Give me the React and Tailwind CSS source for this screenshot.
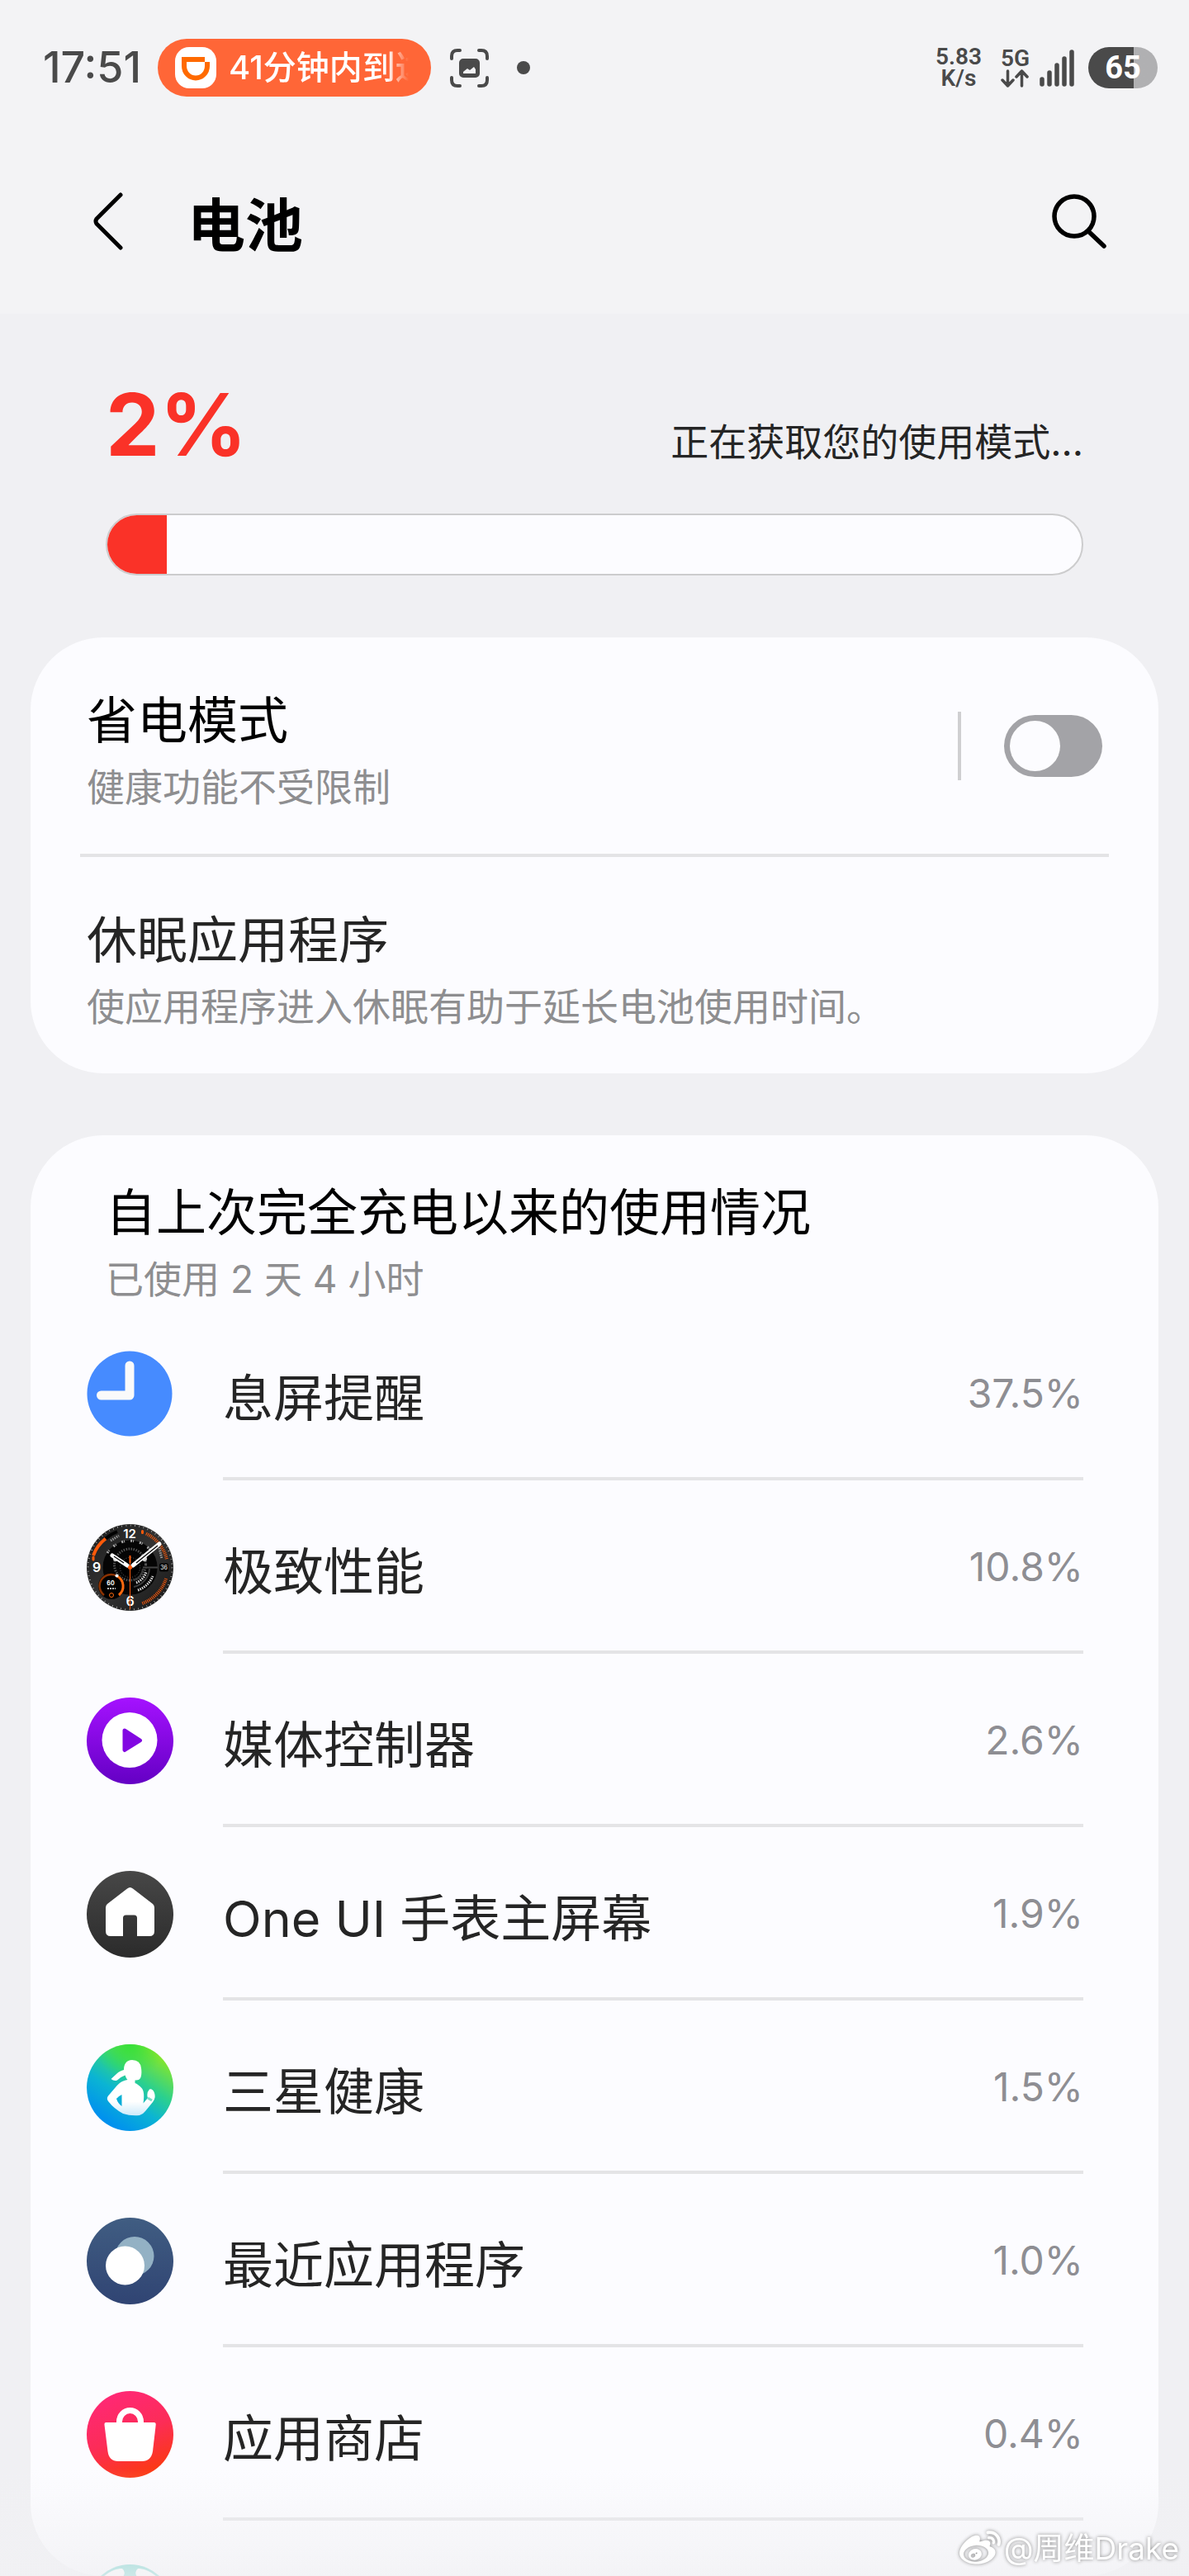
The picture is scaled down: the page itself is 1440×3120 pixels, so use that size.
import React, { useState } from 'react';
import { FaWeibo } from 'react-icons/fa';

function ClockIcon() {
  return (
    <svg viewBox="0 0 105 105" className="h-[105px] w-[105px]" aria-hidden="true">
      <circle cx="52" cy="52" r="51.5" fill="#468bff" />
      <path d="M52 18V54H17.5" fill="none" stroke="#fafafa" strokeWidth="11" strokeLinecap="round" strokeLinejoin="round" />
    </svg>
  );
}

function WatchFaceIcon() {
  return (
    <svg viewBox="0 0 105 105" className="h-[105px] w-[105px]" aria-hidden="true" fontFamily="Inter, sans-serif">
      <defs>
        <linearGradient id="watchBg" x1="0" y1="0" x2="1" y2="1">
          <stop offset="0" stopColor="#1c1c1c" />
          <stop offset="0.5" stopColor="#333" />
          <stop offset="1" stopColor="#161616" />
        </linearGradient>
      </defs>
      <circle cx="52.5" cy="52.5" r="52.5" fill="url(#watchBg)" />
      <circle cx="52.5" cy="52.5" r="51" fill="none" stroke="#c9c9c9" strokeWidth="2" strokeDasharray="0.7 4.64" />
      <circle cx="52.5" cy="52.5" r="33" fill="#050505" />
      <circle cx="52.5" cy="49" r="19" fill="none" stroke="#555" strokeWidth="3" strokeDasharray="1.5 1.5" />
      <circle cx="52.5" cy="52.5" r="12" fill="#000" stroke="#666" strokeDasharray="1 2" />
      <circle cx="35" cy="42" r="3" fill="#d5d5d5" />
      <circle cx="70" cy="42" r="3" fill="#d5d5d5" />
      <path d="M68 52.5H86" stroke="#444" strokeWidth="2" />
      <path d="M76 54A24 24 0 0 1 57 76M68 54A16 16 0 0 1 57 68" fill="none" stroke="#3c3c3c" strokeWidth="2" />
      <path d="M25 35A33 33 0 0 1 80 35" fill="none" stroke="#aaa" strokeWidth="3" strokeDasharray="2 1 1 7" />
      <path d="M60 71A20 20 0 0 0 72 58M62 80A30 30 0 0 0 80 63" fill="none" stroke="#ddd" strokeWidth="3" strokeDasharray="1.5 1.2" />
      {/* outer gauges */}
      <path d="M23 17.5A46 46 0 0 0 8 38" fill="none" stroke="#ff5a0a" strokeWidth="4" />
      <path d="M23 17.5A46 46 0 0 1 37 9" fill="none" stroke="#000" strokeWidth="4" />
      <path d="M8 40V43M67.5 8.5V10.5" stroke="#ff5a0a" strokeWidth="3" strokeLinecap="round" />
      <path d="M72 11.5A46 46 0 0 1 97 43M96 66A46 46 0 0 1 67 96" fill="none" stroke="#ff5a0a" strokeWidth="4" strokeDasharray="1 1.2" />
      <path d="M29 20L39 14M88 29L91 42" stroke="#999" strokeWidth="3" strokeDasharray="1.5 1.2" />
      {/* battery dial */}
      <circle cx="30" cy="75" r="16" fill="#000" />
      <path d="M21 86A14 14 0 0 1 36 62.5" fill="none" stroke="#8a3203" strokeWidth="2.5" />
      <path d="M37 63A14 14 0 0 1 39 86" fill="none" stroke="#ff6a10" strokeWidth="3" />
      <circle cx="36.5" cy="62.5" r="2" fill="#fff" />
      <circle cx="30" cy="86" r="2.5" fill="none" stroke="#ff6a10" />
      <text x="29" y="74" fontSize="7" fontWeight="700" fill="#fff" textAnchor="middle">60</text>
      <path d="M25 78H35" stroke="#bbb" strokeWidth="2" strokeDasharray="2 1" />
      <text x="52" y="17" fontSize="15" fontWeight="600" fill="#fff" textAnchor="middle">12</text>
      <text x="12" y="58" fontSize="16" fontWeight="600" fill="#fff" textAnchor="middle">9</text>
      <text x="52.5" y="99" fontSize="16" fontWeight="600" fill="#fff" textAnchor="middle">6</text>
      <rect x="88" y="47.5" width="11" height="10" rx="2" fill="#000" />
      <text x="93.5" y="55" fontSize="7" fill="#fff" textAnchor="middle">36</text>
      {/* hands */}
      <path d="M49 50L31 38M56 50L88 24" stroke="#fff" strokeWidth="5" strokeLinecap="round" />
      <path d="M45 47L33 39M60 47L86 26" stroke="#111" strokeWidth="1.5" />
      <path d="M52.5 38V103" stroke="#ff5a0a" strokeWidth="1" />
      <path d="M52.5 38V47" stroke="#ff5a0a" strokeWidth="2" />
      <circle cx="52.5" cy="52.5" r="2.5" fill="#ff5a0a" />
    </svg>
  );
}

function MediaIcon() {
  return (
    <svg viewBox="0 0 105 105" className="h-[105px] w-[105px]" aria-hidden="true">
      <defs>
        <linearGradient id="mediaBg" x1="0" y1="0" x2="0" y2="1">
          <stop offset="0" stopColor="#a512ff" />
          <stop offset="1" stopColor="#6400c4" />
        </linearGradient>
      </defs>
      <circle cx="52.5" cy="52.5" r="52.5" fill="url(#mediaBg)" />
      <circle cx="52" cy="51.5" r="33.5" fill="#fff" />
      <path d="M46 40L64.5 52L46 63.5Z" fill="#8207e2" stroke="#8207e2" strokeWidth="5" strokeLinejoin="round" />
    </svg>
  );
}

function HomeIcon() {
  return (
    <svg viewBox="0 0 105 105" className="h-[105px] w-[105px]" aria-hidden="true">
      <defs>
        <linearGradient id="homeBg" x1="0" y1="0" x2="0" y2="1">
          <stop offset="0" stopColor="#474747" />
          <stop offset="1" stopColor="#2b2b2b" />
        </linearGradient>
      </defs>
      <circle cx="52.5" cy="52.5" r="52.5" fill="url(#homeBg)" />
      <path
        d="M49 21.5Q52.5 18.5 56 21.5L80 40Q82 41.5 82 44.5V73Q82 79 76 79H61V57Q61 53.5 57.5 53.5H47.5Q44 53.5 44 57V79H29Q23 79 23 73V44.5Q23 41.5 25 40Z"
        fill="#fff"
      />
    </svg>
  );
}

function HealthIcon() {
  return (
    <svg viewBox="0 0 105 105" className="h-[105px] w-[105px]" aria-hidden="true">
      <defs>
        <linearGradient id="healthBg" x1="0.25" y1="0.9" x2="0.8" y2="0.1">
          <stop offset="0" stopColor="#0091ee" />
          <stop offset="0.35" stopColor="#0bb4d3" />
          <stop offset="0.62" stopColor="#2bd08e" />
          <stop offset="1" stopColor="#86e62a" />
        </linearGradient>
        <radialGradient id="healthGreen" cx="0.5" cy="0" r="0.4">
          <stop offset="0" stopColor="#35e03a" />
          <stop offset="1" stopColor="#35e03a" stopOpacity="0" />
        </radialGradient>
        <linearGradient id="healthBody" x1="0" y1="0" x2="0" y2="1">
          <stop offset="0.75" stopColor="#fff" />
          <stop offset="1" stopColor="#cdeafa" />
        </linearGradient>
      </defs>
      <circle cx="52.5" cy="52.5" r="52.5" fill="url(#healthBg)" />
      <circle cx="52.5" cy="52.5" r="52.5" fill="url(#healthGreen)" />
      <path
        fillRule="evenodd"
        d="M55 19C48 19 45 24 45 31C42 32 39 33 36 36L29.5 42Q33 45 37 43.5Q42 39 46.5 37.5Q47.5 41 49.5 43C43 44 39 47 35 52L26 62.5Q23.5 66 26.5 69.5Q33 78 44 84Q53 87 64 86Q68 85 71 81L80 70Q84 65 82 59Q80 53.5 76 54.5Q72 59 74 65L68.5 71.5Q70.5 58 67 53.5Q62 48 58.5 47V43.5Q64 44 65.5 40Q67 35 66 29Q65 19 55 19ZM36 66Q38 63 42.5 61V75Q38 72 36 66Z"
        fill="url(#healthBody)"
      />
      <path d="M74 65L79 68" stroke="#7fdcc8" strokeWidth="3" />
    </svg>
  );
}

function RecentsIcon() {
  return (
    <svg viewBox="0 0 105 105" className="h-[105px] w-[105px]" aria-hidden="true">
      <defs>
        <linearGradient id="recentsBg" x1="0" y1="0" x2="0" y2="1">
          <stop offset="0" stopColor="#405d82" />
          <stop offset="1" stopColor="#304473" />
        </linearGradient>
      </defs>
      <circle cx="52.5" cy="52.5" r="52.5" fill="url(#recentsBg)" />
      <circle cx="58" cy="46.5" r="23.5" fill="#93b1c4" />
      <circle cx="46.5" cy="58" r="23.5" fill="#fff" />
    </svg>
  );
}

function StoreIcon() {
  return (
    <svg viewBox="0 0 105 105" className="h-[105px] w-[105px]" aria-hidden="true">
      <defs>
        <linearGradient id="storeBg" x1="0.3" y1="0" x2="0.7" y2="1">
          <stop offset="0" stopColor="#ff2876" />
          <stop offset="0.5" stopColor="#fc2c58" />
          <stop offset="1" stopColor="#fb3a0c" />
        </linearGradient>
      </defs>
      <circle cx="52.5" cy="52.5" r="52.5" fill="url(#storeBg)" />
      <path d="M39.5 40V37A13 13.5 0 0 1 65.5 37V40" fill="none" stroke="#fff" strokeWidth="7" />
      <path d="M23.5 38H81.5Q84 38 83.7 41L80 73Q78 85 67 85H38Q27 85 25.5 73L21.5 41Q21.2 38 23.5 38Z" fill="#fff" />
    </svg>
  );
}

function BallIcon() {
  return (
    <svg viewBox="0 0 105 105" className="h-[105px] w-[105px]" aria-hidden="true">
      <circle cx="52.5" cy="52.5" r="52.5" fill="#3cc4b8" />
      <path d="M18 17C27 8 36 5 43 5Q48 9 44 15Q34 24 16 28ZM87 17C78 8 69 5 62 5Q57 9 61 15Q71 24 89 28Z" fill="#fff" />
    </svg>
  );
}

const apps = [
  { name: '息屏提醒', usage: '37.5%', Icon: ClockIcon },
  { name: '极致性能', usage: '10.8%', Icon: WatchFaceIcon },
  { name: '媒体控制器', usage: '2.6%', Icon: MediaIcon },
  { name: 'One UI 手表主屏幕', usage: '1.9%', Icon: HomeIcon },
  { name: '三星健康', usage: '1.5%', Icon: HealthIcon },
  { name: '最近应用程序', usage: '1.0%', Icon: RecentsIcon },
  { name: '应用商店', usage: '0.4%', Icon: StoreIcon },
  { name: '', usage: '', Icon: BallIcon },
];

function StatusBar() {
  return (
    <div className="flex h-[164px] shrink-0 items-center bg-[#f3f3f5] pr-[38px] pl-[52px] text-[#4a4a4a]">
      <span className="w-[139px] text-[52px] leading-[70px] font-medium whitespace-nowrap">17:51</span>

      {/* Live trip capsule */}
      <div className="flex h-[70px] w-[331px] items-center gap-[15px] rounded-full bg-[#ff6637] pl-[21px]">
        <svg viewBox="0 0 50 50" className="h-[50px] w-[50px] shrink-0" aria-hidden="true">
          <rect width="50" height="50" rx="17" fill="#fff" />
          <path d="M8 15H36M11 15V23A14 14.5 0 0 0 39 23V18" fill="none" stroke="#ff6a00" strokeWidth="6" />
        </svg>
        <span className="w-[218px] overflow-hidden [mask-image:linear-gradient(to_right,black_88%,transparent)] text-[40px] leading-[60px] font-medium whitespace-nowrap text-white">
          41分钟内到达
        </span>
      </div>

      <svg viewBox="0 0 47 47" className="ml-[23px] h-[47px] w-[47px]" fill="none" stroke="#4a4a4a" strokeWidth="4" strokeLinecap="round" aria-hidden="true">
        <path d="M2 12V9Q2 2 9 2H12M35 2H38Q45 2 45 9V12M45 35V38Q45 45 38 45H35M12 45H9Q2 45 2 38V35" />
        <rect x="13" y="14" width="21" height="19" rx="3" fill="#4a4a4a" />
        <path d="M16 28L21 24L24 26L29 22L31 25V30H16Z" fill="#f3f3f5" stroke="none" />
      </svg>
      <span className="ml-[34px] h-4 w-4 rounded-full bg-[#4a4a4a]" />

      <div className="ml-auto flex items-center font-['Roboto','Noto_Sans_CJK_SC',sans-serif] font-semibold">
        <div className="mr-[23px] text-center text-[28px] leading-[26px]">
          <div>5.83</div>
          <div>K/s</div>
        </div>
        <div className="mr-3 flex flex-col items-center">
          <span className="text-[28px] leading-[26px]">5G</span>
          <svg viewBox="0 0 34 22" className="h-[22px] w-[34px]" fill="none" stroke="#4a4a4a" strokeWidth="3.5" strokeLinecap="round" strokeLinejoin="round" aria-hidden="true">
            <path d="M8.5 2V20M2 13L8.5 20L15 13M25.5 20V2M19 9L25.5 2L32 9" />
          </svg>
        </div>
        <svg viewBox="0 0 42 45" className="mr-[17px] h-[45px] w-[42px]" stroke="#4a4a4a" strokeWidth="5.5" strokeLinecap="round" aria-hidden="true">
          <path d="M3 36V42M12 28V42M21 19V42M30 11V42M39 3V42" />
        </svg>
        <div className="flex h-[50px] w-[84px] items-center justify-center rounded-full bg-linear-to-r from-[#4a4a4a] from-65% to-[#b0b0b2] to-65% text-[38px] leading-[50px] font-bold text-white">
          65
        </div>
      </div>
    </div>
  );
}

function Header() {
  return (
    <header className="flex h-[216px] shrink-0 items-center bg-[#f3f3f5] pr-[99px] pb-2 pl-[110px] text-black">
      <button type="button" aria-label="返回" className="cursor-pointer">
        <svg viewBox="0 0 42 72" className="h-[72px] w-[42px]" fill="none" stroke="currentColor" strokeWidth="5" strokeLinecap="round" strokeLinejoin="round" aria-hidden="true">
          <path d="M36 4L7 33Q5 36 7 39L36 68" />
        </svg>
      </button>
      <h1 className="ml-[75px] pt-3 text-[70px] leading-[90px] font-bold">电池</h1>
      <button type="button" aria-label="搜索" className="ml-auto cursor-pointer">
        <svg viewBox="0 0 68 68" className="h-[68px] w-[68px]" fill="none" stroke="currentColor" strokeWidth="5.5" strokeLinecap="round" aria-hidden="true">
          <circle cx="28" cy="28" r="24" />
          <path d="M45 46L64 64" />
        </svg>
      </button>
    </header>
  );
}

export default function App() {
  const [powerSaving, setPowerSaving] = useState(false);

  return (
    <div className="relative flex h-screen flex-col overflow-hidden bg-[#f0f0f3] font-['Inter','Noto_Sans_CJK_SC',sans-serif] text-[#252525]">
      <StatusBar />
      <Header />

      <main className="flex min-h-0 flex-1 flex-col">
        {/* Battery level */}
        <section className="shrink-0 px-32 pt-[74px]">
          <div className="flex items-baseline justify-between">
            <span className="text-[104px] leading-[120px] font-bold text-[#fa3228]">2%</span>
            <span className="text-[46px] leading-[60px]">正在获取您的使用模式...</span>
          </div>
          <div
            role="progressbar"
            aria-label="电池电量"
            aria-valuenow={2}
            aria-valuemin={0}
            aria-valuemax={100}
            className="mt-12 h-[75px] overflow-hidden rounded-full border-2 border-[#cccccd] bg-[#fcfcff]"
          >
            <div className="h-full w-[72px] bg-[#fa3228]" />
          </div>
        </section>

        {/* Power options */}
        <section className="mx-[37px] mt-[75px] shrink-0 rounded-[88px] bg-[#fcfcff]">
          <div className="flex items-center px-[68px]">
            <label htmlFor="power-saving" className="flex-1 pt-[59px] pb-[43px]">
              <span className="block text-[61px] leading-[84px] text-black">省电模式</span>
              <span className="block text-[46px] leading-[76px] text-[#8e8e90]">健康功能不受限制</span>
            </label>
            <span className="mr-[52px] h-[83px] w-1 bg-[#cfcfd1]" />
            <input
              id="power-saving"
              type="checkbox"
              role="switch"
              checked={powerSaving}
              onChange={(e) => setPowerSaving(e.target.checked)}
              className="h-[75px] w-[119px] cursor-pointer appearance-none rounded-full bg-[#a3a3a7] p-[7px] before:block before:h-[61px] before:w-[61px] before:rounded-full before:bg-[#fcfcff] checked:bg-[#387aff] checked:before:ml-11"
            />
          </div>
          <hr className="mx-15 border-t-4 border-[#e4e4e6]" />
          <a href="#sleeping-apps" className="block px-[68px] pt-[59px] pb-[43px]">
            <span className="block text-[61px] leading-[84px]">休眠应用程序</span>
            <span className="block text-[46px] leading-[76px] text-[#8e8e90]">使应用程序进入休眠有助于延长电池使用时间。</span>
          </a>
        </section>

        {/* Usage since last full charge */}
        <section className="mx-[37px] mt-[75px] min-h-0 flex-1 overflow-hidden rounded-[88px] bg-[#fcfcff] pt-13">
          <div className="px-[91px]">
            <h2 className="text-[61px] leading-[84px] text-black">自上次完全充电以来的使用情况</h2>
            <p className="text-[46px] leading-[76px] text-[#8e8e90]">已使用 2 天 4 小时</p>
          </div>
          <ul className="-mt-1">
            {apps.map(({ name, usage, Icon }) => (
              <li key={name} className="flex h-[210px] items-center gap-15 pr-[91px] pl-[68px]">
                <Icon />
                <div className="flex h-full flex-1 items-center justify-between border-b-4 border-[#e4e4e6]">
                  <span className="pt-4 text-[61px] leading-[84px]">{name}</span>
                  <span className="pt-1 text-[48px] leading-[60px] text-[#8e8e93]">{usage}</span>
                </div>
              </li>
            ))}
          </ul>
        </section>
      </main>

      {/* Bottom fade over the scrolling list */}
      <div className="pointer-events-none absolute inset-x-0 bottom-0 h-[130px] bg-linear-to-b from-[#f1f1f4]/0 to-[#f1f1f4]/80" />

      <div className="pointer-events-none absolute right-3 bottom-2 flex items-center gap-1 text-[37px] leading-[48px] text-white [filter:drop-shadow(0_0_2px_#888)]">
        <FaWeibo className="h-[50px] w-[50px]" aria-hidden="true" />
        <span>@周维Drake</span>
      </div>
    </div>
  );
}
